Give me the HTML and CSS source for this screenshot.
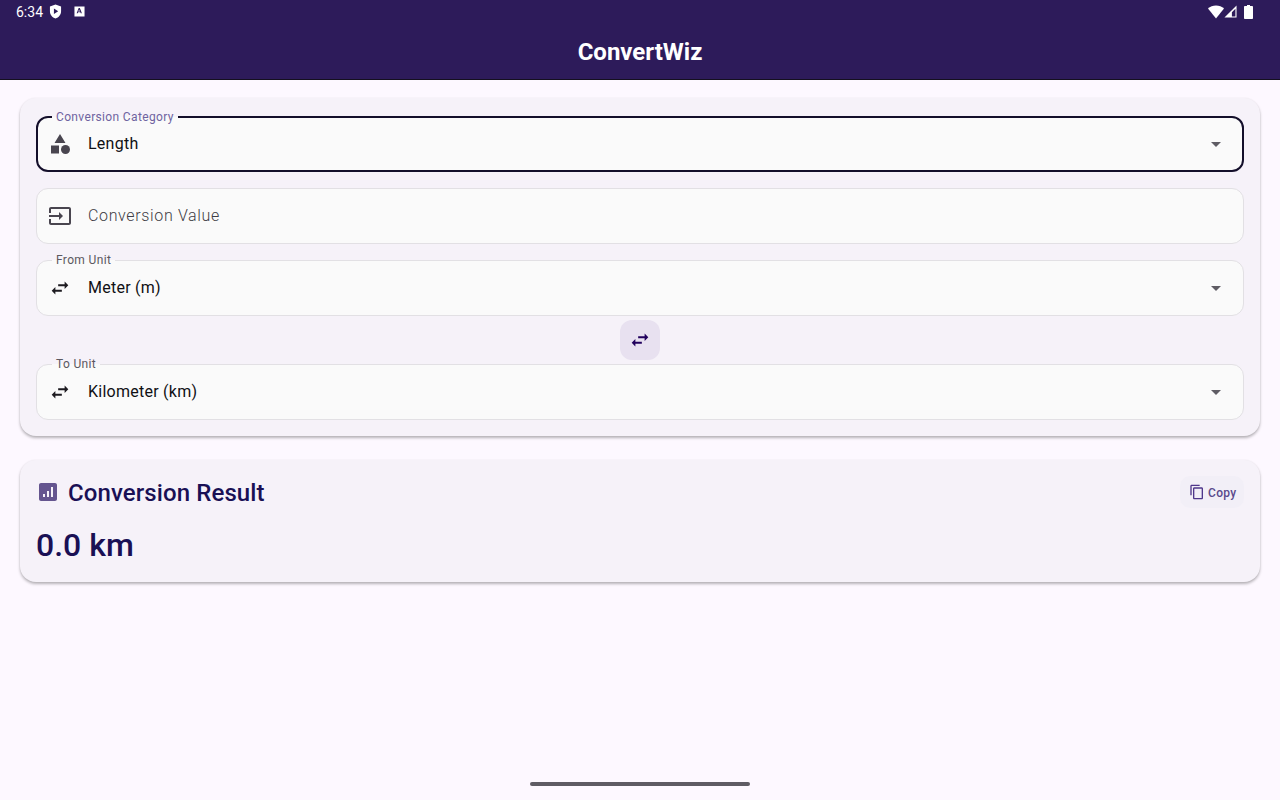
FILE: index.html
```html
<!DOCTYPE html>
<html lang="en">
<head>
<meta charset="utf-8">
<title>ConvertWiz</title>
<link rel="stylesheet" href="styles.css">
</head>
<body>
<header class="appbar">
  <div class="status">
    <span class="time">6:34</span>
    <svg class="st-shield" viewBox="0 0 14 16"><path fill="#fff" fill-rule="evenodd" d="M7 .5 1 2.600v5c0 3.700 2.500 6.800 6 7.900 3.500-1.100 6-4.200 6-7.900v-5zM5.300 4.800l4.600 3-4.600 3z"/></svg>
    <svg class="st-a" viewBox="0 0 12 12"><path fill="#fff" fill-rule="evenodd" d="M.5.500h11v11H.5zM5.100 2.300 2.900 8h1.200l.4-1.200h2.400L7.400 8h1.200L6.400 2.300zM5.500 3.800l.9 2.100H4.700z"/></svg>
    <span class="spacer"></span>
    <svg class="st-wifi" viewBox="0 0 16 14"><path fill="#fff" d="M8 13.500 0 3.600C2.100 1.700 4.900.5 8 .5s5.900 1.200 8 3.100z"/></svg>
    <svg class="st-signal" viewBox="0 0 14 14"><path fill="#fff" fill-rule="evenodd" d="M13.500.5v13H.5zM12.300 4 8.500 7.800v4.500h3.800z"/></svg>
    <svg class="st-batt" viewBox="0 0 9 14"><path fill="#fff" d="M3 0h3v1h2c.5 0 1 .4 1 1v11c0 .6-.5 1-1 1H1c-.5 0-1-.4-1-1V2c0-.6.5-1 1-1h2z"/></svg>
  </div>
  <h1 class="title">ConvertWiz</h1>
</header>

<main class="content">
  <section class="card form-card">
    <div class="field field-focus">
      <span class="float-label label-focus">Conversion Category</span>
      <svg class="lead" viewBox="0 0 24 24"><path fill="#49454f" d="M12 2 6.500 11h11zM3 13.500h8v8H3z"/><circle fill="#49454f" cx="17.500" cy="17.500" r="4.500"/></svg>
      <span class="value">Length</span>
      <svg class="drop" viewBox="0 0 24 24"><path fill="#5f5c64" d="M7 10l5 5 5-5z"/></svg>
    </div>
    <div class="field">
      <svg class="lead" viewBox="0 0 24 24"><path fill="#49454f" d="M21 3.010H3c-1.100 0-2 .9-2 2V9h2V4.990h18v14.030H3V15H1v4.010c0 1.100.9 1.980 2 1.980h18c1.100 0 2-.88 2-1.980v-14c0-1.110-.9-2-2-2zM11 16l4-4-4-4v3H1v2h10v3z"/></svg>
      <span class="value placeholder">Conversion Value</span>
    </div>
    <div class="field">
      <span class="float-label">From Unit</span>
      <svg class="lead" viewBox="-1 -1 26 26"><path fill="#1d1b20" d="M6.990 11 3 15l3.990 4v-3H14v-2H6.990zM21 9l-3.990-4v3H10v2h7.010v3z"/></svg>
      <span class="value">Meter (m)</span>
      <svg class="drop" viewBox="0 0 24 24"><path fill="#5f5c64" d="M7 10l5 5 5-5z"/></svg>
    </div>
    <button class="swap" type="button" aria-label="Swap units">
      <svg class="swap-icon" viewBox="-1 -1 26 26"><path fill="#21005d" d="M6.990 11 3 15l3.990 4v-3H14v-2H6.990zM21 9l-3.990-4v3H10v2h7.010v3z"/></svg>
    </button>
    <div class="field">
      <span class="float-label">To Unit</span>
      <svg class="lead" viewBox="-1 -1 26 26"><path fill="#1d1b20" d="M6.990 11 3 15l3.990 4v-3H14v-2H6.990zM21 9l-3.990-4v3H10v2h7.010v3z"/></svg>
      <span class="value">Kilometer (km)</span>
      <svg class="drop" viewBox="0 0 24 24"><path fill="#5f5c64" d="M7 10l5 5 5-5z"/></svg>
    </div>
  </section>

  <section class="card result-card">
    <div class="result-head">
      <svg class="result-icon" viewBox="0 0 24 24"><path fill="#65558f" fill-rule="evenodd" d="M5 3h14c1.100 0 2 .9 2 2v14c0 1.100-.9 2-2 2H5c-1.100 0-2-.9-2-2V5c0-1.100.9-2 2-2zM7 14v3h2v-3zM11 11v6h2v-6zM15 7v10h2V7z"/></svg>
      <h2 class="result-title">Conversion Result</h2>
      <button class="copy" type="button">
        <svg class="copy-icon" viewBox="0 0 24 24"><path fill="#4f378b" d="M16 1H4c-1.100 0-2 .9-2 2v14h2V3h12zm3 4H8c-1.100 0-2 .9-2 2v14c0 1.100.9 2 2 2h11c1.100 0 2-.9 2-2V7c0-1.100-.9-2-2-2zm0 16H8V7h11z"/></svg>
        <span class="copy-label">Copy</span>
      </button>
    </div>
    <div class="result-value">0.0 km</div>
  </section>
</main>

<div class="nav-area"><span class="home-bar"></span></div>
</body>
</html>
```

FILE: styles.css
```css
* { box-sizing: border-box; }

html, body { height: 100%; }

body {
  margin: 0;
  height: 800px;
  overflow: hidden;
  display: flex;
  flex-direction: column;
  background: #fdf8ff;
  font-family: Roboto, "Liberation Sans", sans-serif;
  color: #1d1b20;
}

.appbar {
  height: 80px;
  background: #2d1b5a;
  border-bottom: 1px solid #14101f;
  display: flex;
  flex-direction: column;
  flex: none;
}

.status {
  height: 24px;
  padding: 0 16px;
  display: flex;
  align-items: center;
  color: #fff;
  flex: none;
}

.time { font-size: 14px; width: 28px; margin-top: -1px; }
.st-shield { width: 13px; height: 15px; margin-left: 5px; margin-top: -1px; }
.st-a { width: 11px; height: 11px; margin-left: 12px; margin-top: -1px; }
.spacer { flex: 1; }
.st-wifi { width: 16px; height: 14px; margin-top: -1px; }
.st-signal { width: 13px; height: 13px; margin-top: -1px; }
.st-batt { width: 9px; height: 14px; margin-left: 7px; margin-right: 11px; margin-top: -1px; }

.title {
  margin: 0;
  text-align: center;
  font-size: 24px;
  font-weight: 700;
  line-height: 56px;
  color: #fff;
}

.content {
  padding: 18px 20px 0;
  display: flex;
  flex-direction: column;
  gap: 24px;
}

.card {
  background: #f6f2f9;
  border-radius: 16px;
  box-shadow: 0 2px 3px rgba(0,0,0,.28), 0 0 2px rgba(0,0,0,.05);
  padding: 16px;
}

.form-card { height: 338px; padding-top: 18px; display: flex; flex-direction: column; }

.field {
  position: relative;
  height: 56px;
  flex: none;
  margin-bottom: 16px;
  background: #fafafa;
  border: 1px solid #e2e0e4;
  border-radius: 12px;
  display: flex;
  align-items: center;
  padding: 0 15px 0 11px;
}

.field:nth-of-type(3) { margin-bottom: 4px; }
.field:last-child { margin-bottom: 0; }

.field-focus { border: 2px solid #140f2b; padding: 0 14px 0 10px; }

.float-label {
  position: absolute;
  top: -8px;
  left: 15px;
  padding: 0 4px;
  font-size: 12px;
  line-height: 14px;
  letter-spacing: .35px;
  color: #5b5860;
  background: linear-gradient(#f6f2f9 50%, #fafafa 50%);
}

.label-focus { left: 14px; color: #6f63a0; }

.lead { width: 24px; height: 24px; flex: none; }

.value {
  margin-left: 16px;
  margin-bottom: 2px;
  flex: 1;
  font-size: 16px;
  letter-spacing: .25px;
  color: #101014;
}

.placeholder { color: #3f3d45; font-weight: 300; letter-spacing: .65px; }

.drop { width: 24px; height: 24px; flex: none; }

.swap {
  width: 40px;
  height: 40px;
  padding: 0;
  margin: 0 auto 4px;
  flex: none;
  border: 0;
  border-radius: 12px;
  background: #e8e1f0;
  display: flex;
  align-items: center;
  justify-content: center;
}

.swap-icon { width: 24px; height: 24px; }

.result-card { height: 122px; }

.result-head { display: flex; align-items: center; height: 32px; }

.result-icon { width: 24px; height: 24px; flex: none; }

.result-title {
  margin: 1px 0 0 8px;
  flex: 1;
  font-size: 24px;
  font-weight: 500;
  letter-spacing: .1px;
  color: #1a1055;
}

.copy {
  height: 32px;
  width: 64px;
  padding: 0 0 0 9px;
  border: 0;
  border-radius: 10px;
  background: #f2eff7;
  display: flex;
  align-items: center;
  gap: 3px;
  font-family: inherit;
  font-size: 12px;
  font-weight: 500;
  letter-spacing: .3px;
  color: #5a4a8c;
}

.copy-icon { width: 16px; height: 16px; flex: none; }
.copy-label { padding-top: 1px; }

.result-value {
  margin-top: 17px;
  font-size: 32px;
  line-height: 40px;
  font-weight: 500;
  color: #1a1055;
}

.nav-area {
  margin-top: auto;
  height: 36px;
  display: flex;
  justify-content: center;
  flex: none;
}

.home-bar {
  width: 220px;
  height: 4px;
  margin-top: 18px;
  border-radius: 2px;
  background: #5f5c64;
}
```
